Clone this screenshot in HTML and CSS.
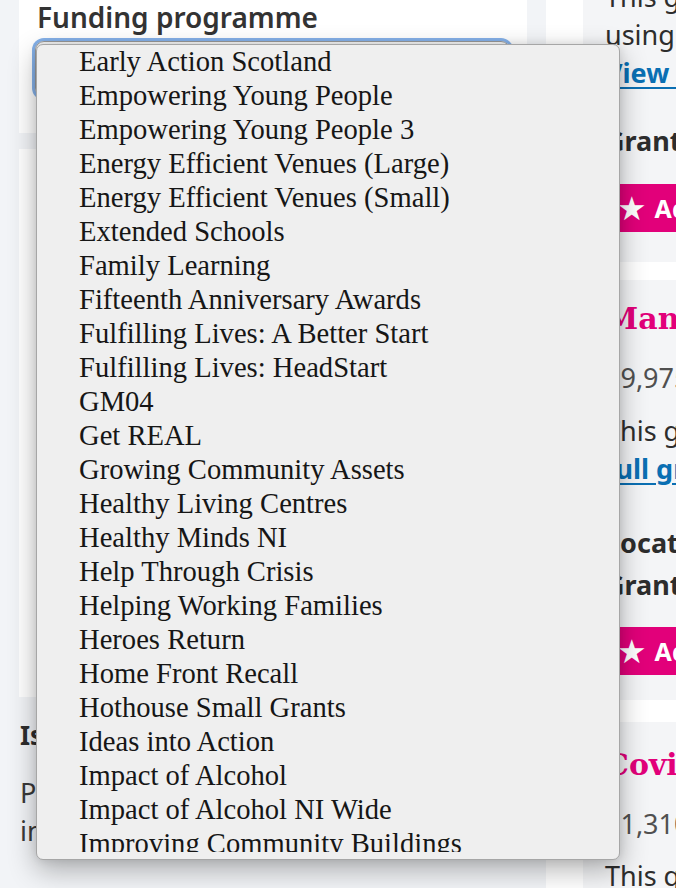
FILE: index.html
```html
<!DOCTYPE html>
<html lang="en">
<head>
<meta charset="utf-8">
<title>Grant search</title>
<link rel="stylesheet" href="styles.css">
</head>
<body>
<div class="page">
  <div class="left">
    <section class="panel panel-top">
      <label class="field-label">Funding programme</label>
      <div class="select-box"></div>
    </section>
    <section class="panel panel-filters"></section>
    <section class="feedback">
      <h3 class="feedback-title">Is there anything wrong with this page?</h3>
      <p class="feedback-text">Please tell us so that we can<br>improve the way our website works.</p>
    </section>
  </div>
  <div class="right">
    <article class="result result-1">
      <p class="result-desc">This grant was awarded to support young people<br>using sport to build confidence and skills.<br><a class="details-link" href="#">View full grant details</a></p>
      <h4 class="meta meta-first">Grant programme: Awards for All</h4>
      <button class="add-btn"><span class="star">★</span> Add to shortlist</button>
    </article>
    <article class="result result-2">
      <h2 class="result-title">Manchester Youth Zone</h2>
      <p class="amount">£9,975</p>
      <p class="result-desc desc-2">This grant was awarded to... <a class="details-link" href="#">View</a><br><a class="details-link" href="#">full grant details</a></p>
      <h4 class="meta meta-loc">Location: Manchester</h4>
      <h4 class="meta">Grant programme: Awards for All</h4>
      <button class="add-btn"><span class="star">★</span> Add to shortlist</button>
    </article>
    <article class="result result-3">
      <h2 class="result-title">Covid-19 Community Response</h2>
      <p class="amount">£1,310</p>
      <p class="result-desc desc-3">This grant was awarded to help local groups</p>
    </article>
  </div>
</div>

<div class="dropdown">
  <div class="dropdown-view">
    <ul class="options">
      <li>Early Action Scotland</li>
      <li>Empowering Young People</li>
      <li>Empowering Young People 3</li>
      <li>Energy Efficient Venues (Large)</li>
      <li>Energy Efficient Venues (Small)</li>
      <li>Extended Schools</li>
      <li>Family Learning</li>
      <li>Fifteenth Anniversary Awards</li>
      <li>Fulfilling Lives: A Better Start</li>
      <li>Fulfilling Lives: HeadStart</li>
      <li>GM04</li>
      <li>Get REAL</li>
      <li>Growing Community Assets</li>
      <li>Healthy Living Centres</li>
      <li>Healthy Minds NI</li>
      <li>Help Through Crisis</li>
      <li>Helping Working Families</li>
      <li>Heroes Return</li>
      <li>Home Front Recall</li>
      <li>Hothouse Small Grants</li>
      <li>Ideas into Action</li>
      <li>Impact of Alcohol</li>
      <li>Impact of Alcohol NI Wide</li>
      <li>Improving Community Buildings</li>
      <li>Investing in Communities</li>
    </ul>
  </div>
</div>
</body>
</html>
```
FILE: styles.css
```css
* { box-sizing: border-box; }
html, body {
  margin: 0;
  padding: 0;
  height: 100%;
  overflow: hidden;
}
body {
  background: #f2f4f7;
  font-family: "Noto Sans", "Liberation Sans", sans-serif;
  color: #2d2d2d;
  position: relative;
}
.page {
  display: flex;
  gap: 19px;
  padding-left: 19px;
  margin-top: -40px;
  width: 1200px;
}
.left {
  width: 508px;
  flex: 0 0 508px;
  display: flex;
  flex-direction: column;
}
.panel {
  background: #fff;
}
.panel-top {
  padding: 40px 17px 36px 16px;
}
.field-label {
  display: block;
  font-size: 28px;
  font-weight: 600;
  line-height: 34px;
  padding-left: 2px;
  color: #333;
  white-space: nowrap;
}
.select-box {
  margin-top: 7px;
  height: 56px;
  border: 1px solid #9a9a9a;
  border-radius: 9px;
  background: linear-gradient(#f7f7f7, #e6e6e6);
  box-shadow: 0 0 0 3px #86b2ea;
}
.panel-filters {
  margin-top: 16px;
  height: 548px;
}
.feedback {
  padding-left: 1px;
}
.feedback-title {
  margin: 21px 0 0;
  font-size: 26px;
  line-height: 34px;
  font-weight: 700;
  color: #2d2d2d;
}
.feedback-title, .feedback-text { white-space: nowrap; }
.feedback-text {
  margin: 22px 0 0;
  font-size: 27px;
  line-height: 38px;
  color: #3a3a3a;
}

.right {
  flex: 0 0 560px;
  background: #fff;
  padding-left: 37px;
}
.result {
  background: #f4f5f7;
  padding: 0 22px;
  white-space: nowrap;
}
.result + .result { margin-top: 18px; }
.result-1 { padding-top: 18px; padding-bottom: 30px; }
.result-2 { padding-top: 22px; padding-bottom: 25px; }
.result-3 { padding-top: 26px; margin-top: 22px !important; height: 300px; }

.result-desc {
  margin: 0;
  font-size: 27px;
  line-height: 38px;
  color: #2d2d2d;
}
.details-link {
  color: #0a6fb3;
  font-weight: 700;
  text-decoration: underline;
  text-decoration-thickness: 2px;
  text-underline-offset: 4px;
}
.meta {
  margin: 0;
  font-size: 27px;
  line-height: 38px;
  font-weight: 700;
  color: #2d2d2d;
}
.meta-first { margin-top: 30px; }
.meta-loc { margin-top: 36px; }
.meta + .meta { margin-top: 4px; }
.add-btn {
  display: flex;
  align-items: center;
  gap: 8px;
  margin-top: 24px;
  height: 48px;
  padding: 0 12px;
  border: 0;
  background: #e2007a;
  color: #fff;
  font-family: "Noto Sans", "Liberation Sans", sans-serif;
  font-size: 25px;
  font-weight: 700;
  width: 320px;
}
.result-2 .add-btn { margin-top: 23px; }
.star { font-family: "DejaVu Sans", sans-serif; font-size: 33px; line-height: 1; }
.result-title {
  margin: 0;
  font-family: "DejaVu Serif", serif;
  font-weight: 700;
  font-size: 30px;
  line-height: 34px;
  color: #e2007a;
}
.amount {
  margin: 23px 0 0;
  font-size: 27px;
  line-height: 38px;
  color: #505050;
}
.desc-2 { margin-top: 15px; }
.desc-3 { margin-top: 14px; }

/* open select list overlay */
.dropdown {
  position: absolute;
  left: 36px;
  top: 44px;
  width: 584px;
  height: 816px;
  background: #efefef;
  border: 1px solid #a6a6a6;
  border-radius: 7px;
  box-shadow: 0 10px 28px rgba(0, 0, 0, 0.3), 0 0 10px rgba(0, 0, 0, 0.1);
  padding: 5px 0 7px;
}
.dropdown-view {
  height: 100%;
  overflow: hidden;
}
.options {
  list-style: none;
  margin: -5px 0 0;
  padding: 0 0 0 42px;
  font-family: "Liberation Serif", "Times New Roman", serif;
  font-size: 28.6px;
  line-height: 34px;
  color: #161616;
  white-space: nowrap;
}
```
